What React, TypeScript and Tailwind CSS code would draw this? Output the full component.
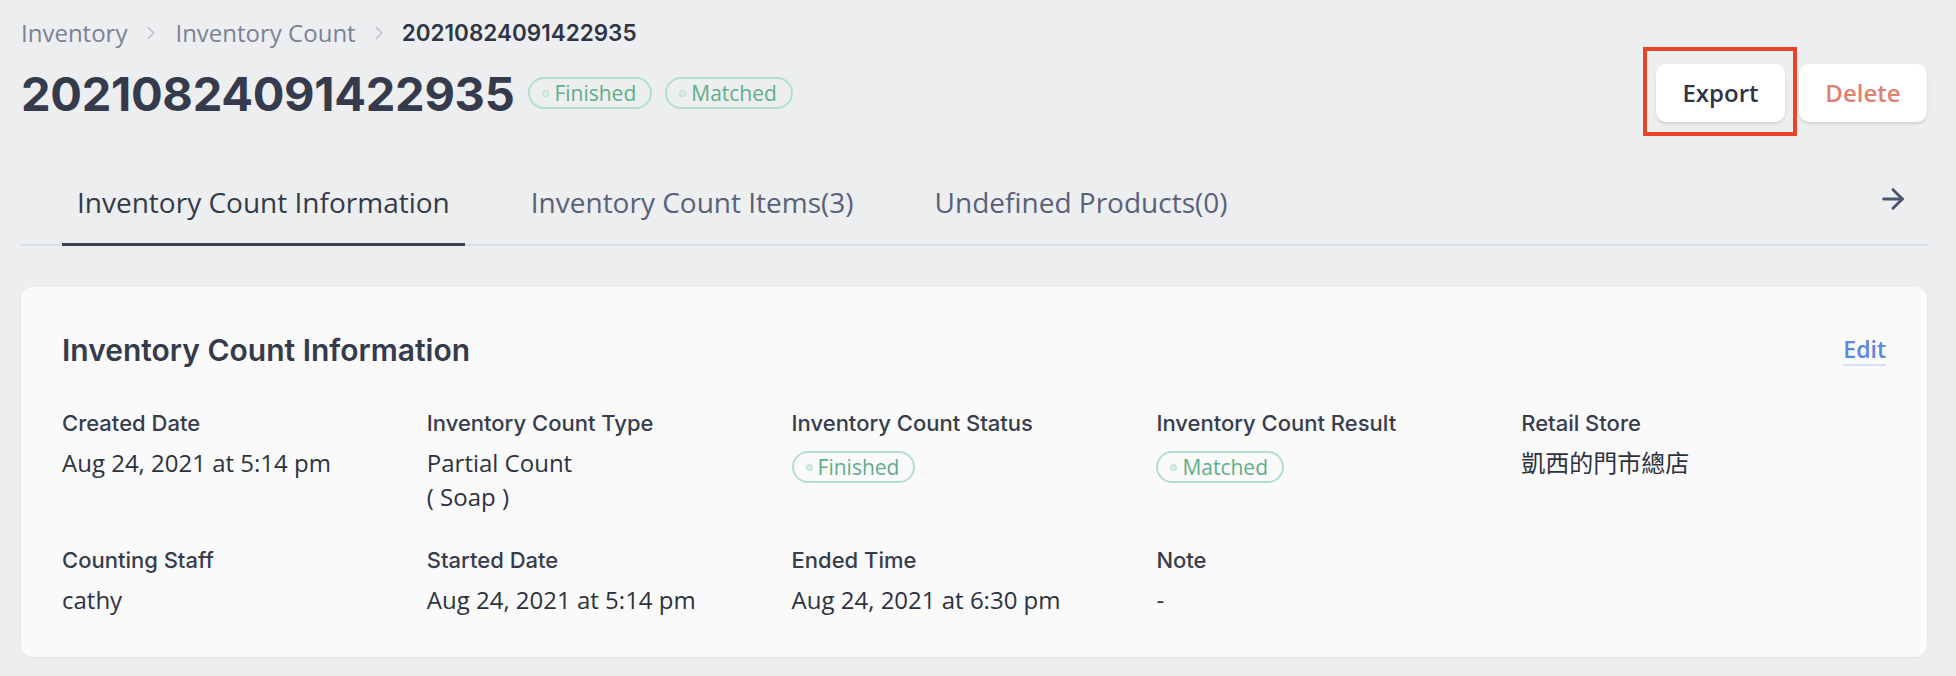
import { ArrowRight, ChevronRight } from "lucide-react";

const openSans = "font-['Open_Sans',_'Noto_Sans_CJK_TC',_sans-serif]";
const inter = "font-['Inter',_'Noto_Sans_CJK_TC',_sans-serif]";

const Badge = ({ label }: { label: string }) => (
  <span
    className={`inline-flex h-[32px] items-center gap-[5px] rounded-full border-2 border-[#b2e0ca] pl-[12px] pr-[14px] text-[21px] leading-none text-[#5fae88] ${openSans}`}
  >
    <span className="h-[7px] w-[7px] rounded-full border border-[#b2e0ca] bg-[#d8efe4]" />
    {label}
  </span>
);

const Field = ({ label, children }: { label: string; children: React.ReactNode }) => (
  <div>
    <div className={`text-[22px] font-medium leading-[28px] text-[#373d4d] ${inter}`}>{label}</div>
    <div className={`mt-[9px] text-[24px] leading-[34px] text-[#2d3240] ${openSans}`}>{children}</div>
  </div>
);

const tabs = ["Inventory Count Information", "Inventory Count Items(3)", "Undefined Products(0)"];

export default function App() {
  return (
    <div className="h-[676px] w-full overflow-hidden bg-[#edeef0] pl-[21px] pr-[29px]">
      <div className="pt-[18px]">
        <nav className={`flex h-[30px] items-center text-[24px] text-[#7b8296] ${openSans}`}>
          <span>Inventory</span>
          <ChevronRight className="mx-[13px] h-[22px] w-[22px] text-[#b9bdc8]" strokeWidth={1.5} />
          <span>Inventory Count</span>
          <ChevronRight className="mx-[12px] h-[22px] w-[22px] text-[#b9bdc8]" strokeWidth={1.5} />
          <span className={`text-[22.5px] font-semibold text-[#2f3546] ${inter}`}>20210824091422935</span>
        </nav>
      </div>

      <div className="mt-[16px] flex h-[58px] items-center justify-between">
        <div className="flex items-center">
          <h1 className={`text-[47px] font-bold leading-none tracking-[-0.3px] text-[#353b4c] ${inter}`}>
            20210824091422935
          </h1>
          <div className="ml-[14px] flex items-center gap-[13px]">
            <Badge label="Finished" />
            <Badge label="Matched" />
          </div>
        </div>
        <div className="flex items-center gap-[14px]">
          <div className="relative">
            <button
              className={`h-[58px] w-[129px] rounded-[10px] bg-white text-[24px] font-semibold text-[#2f3546] shadow-[0_2px_3px_rgba(0,0,0,0.12)] ${openSans}`}
            >
              Export
            </button>
            <div className="pointer-events-none absolute -bottom-[14px] -left-[13px] -right-[12px] -top-[17px] border-4 border-[#e8432d]" />
          </div>
          <button
            className={`h-[58px] w-[128px] rounded-[10px] bg-white text-[24px] font-semibold text-[#e0806f] shadow-[0_2px_3px_rgba(0,0,0,0.12)] ${openSans}`}
          >
            Delete
          </button>
        </div>
      </div>

      <div className="mt-[40px] flex items-end justify-between border-b-2 border-[#d9dee4]">
        <div className="ml-[41px] flex gap-[51px]">
          {tabs.map((t, i) => (
            <div
              key={t}
              className={`-mb-[2px] px-[15px] pb-[23px] pt-[22px] text-[28px] leading-[36px] ${openSans} ${
                i === 0 ? "border-b-[3px] border-[#3a4152] text-[#333a4a]" : "border-b-[3px] border-transparent text-[#59617a]"
              }`}
            >
              {t}
            </div>
          ))}
        </div>
        <ArrowRight className="mb-[29px] mr-[18px] h-[32px] w-[32px] text-[#4d5670]" strokeWidth={2.2} />
      </div>

      <div className="mt-[41px] rounded-[12px] bg-[#fafafa] px-[41px] pb-[40px] pt-[45px] shadow-[0_1px_2px_rgba(0,0,0,0.05)]">
        <div className="flex items-center justify-between">
          <h2 className={`text-[30px] font-semibold leading-[36px] text-[#353b4c] ${inter}`}>
            Inventory Count Information
          </h2>
          <a
            className={`border-b-2 border-[#d3e0f8] text-[23px] font-semibold leading-[30px] text-[#5b87e0] ${openSans}`}
          >
            Edit
          </a>
        </div>

        <div className="mt-[41px] grid grid-cols-5 gap-y-[32px]">
          <Field label="Created Date">Aug 24, 2021 at 5:14 pm</Field>
          <Field label="Inventory Count Type">
            <div>Partial Count</div>
            <div>( Soap )</div>
          </Field>
          <Field label="Inventory Count Status">
            <div className="flex pt-[5px]">
              <Badge label="Finished" />
            </div>
          </Field>
          <Field label="Inventory Count Result">
            <div className="flex pt-[5px]">
              <Badge label="Matched" />
            </div>
          </Field>
          <Field label="Retail Store">凱西的門市總店</Field>
          <Field label="Counting Staff">cathy</Field>
          <Field label="Started Date">Aug 24, 2021 at 5:14 pm</Field>
          <Field label="Ended Time">Aug 24, 2021 at 6:30 pm</Field>
          <Field label="Note">-</Field>
        </div>
      </div>
    </div>
  );
}
